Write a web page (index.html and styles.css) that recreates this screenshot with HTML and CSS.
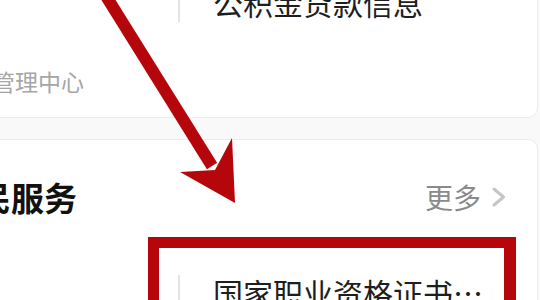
FILE: index.html
```
<!DOCTYPE html>
<html lang="zh-CN">
<head>
<meta charset="utf-8">
<title>便民服务</title>
<link rel="stylesheet" href="styles.css">
</head>
<body>
<div class="screen">
  <section class="card card-top">
    <div class="tile-row tile-row-first">
      <span class="sep"></span>
      <span class="tile-title">公积金贷款信息</span>
    </div>
    <div class="org">公积金管理中心</div>
  </section>
  <section class="card card-services">
    <header class="card-head">
      <h2 class="card-title">便民服务</h2>
      <a class="more">更多<svg class="chev" viewBox="0 0 16 20" width="16" height="20"><path d="M3 2 L12.5 10 L3 18" fill="none" stroke="#c6c6c6" stroke-width="3" stroke-linecap="round" stroke-linejoin="round"/></svg></a>
    </header>
    <div class="tile-row tile-row-second">
      <span class="sep"></span>
      <span class="tile-title">国家职业资格证书…</span>
    </div>
  </section>
  <div class="mark-box"></div>
  <svg class="arrow" viewBox="0 0 540 300" width="540" height="300">
    <line x1="96" y1="-20" x2="212" y2="166" stroke="#b5070b" stroke-width="12"/>
    <polygon points="235,203 180,172 215,170 232,138" fill="#b5070b"/>
  </svg>
</div>
</body>
</html>
```
FILE: styles.css
```
* { box-sizing: border-box; }
html, body { margin: 0; padding: 0; }
body {
  width: 540px;
  height: 300px;
  overflow: hidden;
  background: #f9f9f9;
  font-family: "Noto Sans CJK SC", "Noto Sans", sans-serif;
  color: #222;
}
.screen {
  position: relative;
  display: flow-root;
  margin-left: -100px;
  width: 638px;
  height: 300px;
}
.card {
  background: #fff;
  border: 1px solid #ececec;
  border-radius: 10px;
}
.card-top {
  margin-top: -40px;
  height: 158px;
  display: flex;
  flex-direction: column;
}
.tile-row {
  display: flex;
  align-items: flex-end;
  padding-left: 277px;
}
.tile-row-first { height: 61px; }
.sep {
  width: 2px;
  align-self: stretch;
  background: #e4e4e4;
  margin-right: 33px;
}
.tile-title {
  font-size: 30px;
  line-height: 40px;
  color: #1e1e1e;
  white-space: nowrap;
}
.tile-row-first .tile-title { margin-bottom: 0; }
.org {
  margin-top: 44px;
  padding-left: 22px;
  font-size: 23px;
  line-height: 30px;
  color: #a6a6a6;
  white-space: nowrap;
}
.card-services {
  margin-top: 21px;
  height: 200px;
  padding-top: 35px;
}
.card-head {
  display: flex;
  align-items: center;
  justify-content: space-between;
  padding-left: 44px;
  padding-right: 30px;
}
.card-title {
  margin: 0;
  font-size: 33px;
  line-height: 44px;
  font-weight: 700;
  color: #111;
}
.more {
  display: flex;
  align-items: center;
  gap: 10px;
  font-size: 28px;
  line-height: 40px;
  color: #8a8a8a;
}
.chev { display: block; }
.tile-row-second {
  margin-top: 53px;
  height: 60px;
  align-items: flex-start;
}
.tile-row-second .sep { margin-top: 3px; }
.mark-box {
  position: absolute;
  left: 248px;
  top: 237px;
  width: 368px;
  height: 100px;
  border: 11px solid #b5070b;
  border-right-width: 12px;
}
.arrow {
  position: absolute;
  left: 100px;
  top: 0;
  overflow: visible;
}
```
